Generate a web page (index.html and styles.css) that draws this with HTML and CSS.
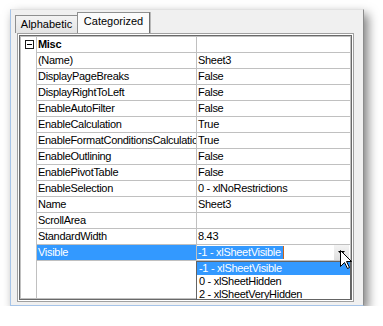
FILE: index.html
```html
<!DOCTYPE html>
<html lang="en">
<head>
    <meta charset="UTF-8">
    <title>Properties</title>
    <link rel="stylesheet" href="styles.css">
</head>
<body>

    <div class="window">
        <div class="tabs">
            <div class="tab">Alphabetic</div>
            <div class="tab active">Categorized</div>
        </div>

        <div class="frame">
            <div class="grid">
                <div class="table">
                    <div class="row">
                        <div class="margin"><span class="toggle"></span></div>
                        <div class="name bold">Misc</div>
                        <div class="value"></div>
                    </div>
                    <div class="row">
                        <div class="margin"></div>
                        <div class="name">(Name)</div>
                        <div class="value">Sheet3</div>
                    </div>
                    <div class="row">
                        <div class="margin"></div>
                        <div class="name">DisplayPageBreaks</div>
                        <div class="value">False</div>
                    </div>
                    <div class="row">
                        <div class="margin"></div>
                        <div class="name">DisplayRightToLeft</div>
                        <div class="value">False</div>
                    </div>
                    <div class="row">
                        <div class="margin"></div>
                        <div class="name">EnableAutoFilter</div>
                        <div class="value">False</div>
                    </div>
                    <div class="row">
                        <div class="margin"></div>
                        <div class="name">EnableCalculation</div>
                        <div class="value">True</div>
                    </div>
                    <div class="row">
                        <div class="margin"></div>
                        <div class="name">EnableFormatConditionsCalculation</div>
                        <div class="value">True</div>
                    </div>
                    <div class="row">
                        <div class="margin"></div>
                        <div class="name">EnableOutlining</div>
                        <div class="value">False</div>
                    </div>
                    <div class="row">
                        <div class="margin"></div>
                        <div class="name">EnablePivotTable</div>
                        <div class="value">False</div>
                    </div>
                    <div class="row">
                        <div class="margin"></div>
                        <div class="name">EnableSelection</div>
                        <div class="value">0 - xlNoRestrictions</div>
                    </div>
                    <div class="row">
                        <div class="margin"></div>
                        <div class="name">Name</div>
                        <div class="value">Sheet3</div>
                    </div>
                    <div class="row">
                        <div class="margin"></div>
                        <div class="name">ScrollArea</div>
                        <div class="value"></div>
                    </div>
                    <div class="row">
                        <div class="margin"></div>
                        <div class="name">StandardWidth</div>
                        <div class="value">8.43</div>
                    </div>
                    <div class="row">
                        <div class="margin"></div>
                        <div class="name selected">Visible</div>
                        <div class="value combo">
                            <span class="sel">-1 - xlSheetVisible</span>
                            <span class="dropBtn">
                                <svg width="7" height="4" viewBox="0 0 7 4"><polygon points="0,0 7,0 3.5,4" fill="#000"/></svg>
                            </span>
                            <!-- open list -->
                            <div class="dropList">
                                <div class="item active">-1 - xlSheetVisible</div>
                                <div class="item">0 - xlSheetHidden</div>
                                <div class="item">2 - xlSheetVeryHidden</div>
                            </div>
                        </div>
                    </div>
                    <div class="row filler">
                        <div class="margin"></div>
                        <div class="name"></div>
                        <div class="value"></div>
                    </div>
                </div>
            </div>
        </div>

        <!-- mouse pointer -->
        <svg class="cursor" width="13" height="20" viewBox="0 0 13 20">
            <path d="M0.5 0.5 L0.5 16.5 L4.5 12.5 L7.5 18.5 L9.5 17.5 L6.5 11.5 L11.5 11.5 Z" fill="#fff" stroke="#000" stroke-width="1"/>
        </svg>
    </div>

</body>
</html>
```

FILE: styles.css
```css
body {
    margin: 0;
    background: #ffffff;
    font-family: "Liberation Sans", Arial, sans-serif;
    font-size: 11px;
    color: #000000;
}

* {
    box-sizing: border-box;
}

.window {
    position: relative;
    width: 354px;
    height: 297px;
    margin: 9px 0 0 10px;
    background: #f0f0f0;
    border-top: 1px solid #e2e2e2;
    border-left: 1px solid #a6c4e8;
    border-bottom: 1px solid #a6c4e8;
    border-right: 1px solid #8c8c8c;
    box-shadow: 4px 5px 10px rgba(0, 0, 0, 0.5);
}

/* Tabs */
.tabs {
    display: flex;
    align-items: flex-end;
    height: 23px;
    padding: 2px 0 0 4px;
}

.tab {
    width: 62px;
    height: 18px;
    line-height: 17px;
    text-align: center;
    border: 1px solid #8e8f8f;
    border-bottom: none;
    border-right: none;
    background: linear-gradient(#f3f3f3, #e4e4e4);
}

.tab.active {
    width: 73px;
    height: 21px;
    background: #fbfbfb;
    border-right: 1px solid #6f6f6f;
    box-shadow: 1px 0 0 #b8b8b8;
}

/* Grid frame */
.frame {
    width: 337px;
    margin-left: 6px;
    padding: 1px;
    background: #ffffff;
    border: 1px solid #a0a0a0;
}

.grid {
    border: 1px solid #696969;
}

.table {
    display: flex;
    flex-direction: column;
    height: 263px;
    background: #ffffff;
    border: 1px solid #c0c0c0;
}

.row {
    display: flex;
    height: 16px;
    flex-shrink: 0;
}

.margin {
    width: 16px;
    border-right: 1px solid #c0c0c0;
}

.name,
.value {
    line-height: 15px;
    padding-left: 1px;
    white-space: nowrap;
    letter-spacing: -0.3px;
    border-bottom: 1px solid #c0c0c0;
}

.name {
    width: 160px;
    overflow: hidden;
    border-right: 1px solid #c0c0c0;
}

.value {
    flex: 1;
}

.bold {
    font-weight: bold;
}

.name.selected {
    background: #3399ff;
    color: #ffffff;
}

.filler {
    flex: 1;
}

.filler .name,
.filler .value {
    border-bottom: none;
}

.toggle {
    display: block;
    position: relative;
    width: 9px;
    height: 9px;
    margin: 3px 0 0 4px;
    border: 1px solid #1a1a1a;
    background: #ffffff;
}

.toggle::after {
    content: "";
    position: absolute;
    left: 1px;
    top: 3px;
    width: 5px;
    height: 1px;
    background: #000000;
}

/* Combo box in the Visible row */
.combo {
    position: relative;
    display: flex;
    padding-left: 0;
}

.sel {
    height: 13px;
    margin-top: 1px;
    padding: 0 2px 0 1px;
    line-height: 13px;
    background: #3399ff;
    color: #ffffff;
    border-right: 1px solid #c8641e;
}

.dropBtn {
    display: flex;
    align-items: center;
    justify-content: center;
    width: 15px;
    height: 15px;
    margin: 0 1px 0 auto;
    background: linear-gradient(#f4f4f4, #dedede);
}

.dropList {
    position: absolute;
    top: 16px;
    left: -1px;
    width: 155px;
    height: 39px;
    overflow: hidden;
    background: #ffffff;
    border: 1px solid #646464;
    z-index: 2;
}

.item {
    height: 13px;
    line-height: 13px;
    padding-left: 2px;
    color: #000000;
}

.item.active {
    background: #3399ff;
    color: #ffffff;
}

.cursor {
    position: absolute;
    left: 329px;
    top: 240px;
    z-index: 3;
}
```
